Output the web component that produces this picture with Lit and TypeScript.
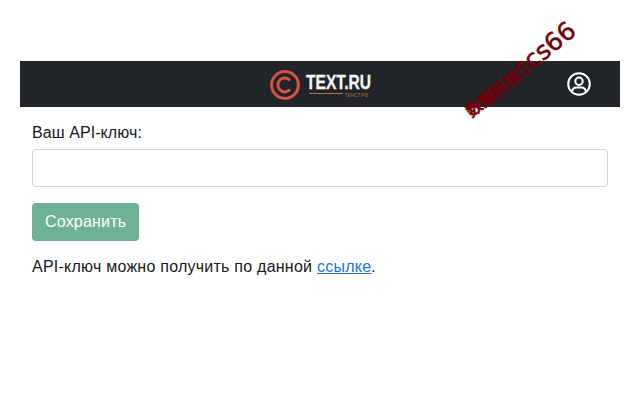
import { LitElement, html, css } from 'lit';
import { customElement } from 'lit/decorators.js';

@customElement('app-root')
export class AppRoot extends LitElement {
  static styles = css`
    :host {
      display: block;
      height: 400px;
      background: #fff;
      font-family: "Liberation Sans", Arial, sans-serif;
      font-size: 16px;
      color: #16181b;
      position: relative;
      overflow: hidden;
      padding-top: 61px;
      box-sizing: border-box;
    }
    .navbar {
      height: 46px;
      margin: 0 20px;
      background: #212529;
      position: relative;
      display: flex;
      align-items: center;
      justify-content: center;
    }
    .logo {
      display: flex;
      align-items: center;
      gap: 6px;
      margin-top: 2px;
    }
    .brand {
      display: flex;
      flex-direction: column;
      align-items: flex-start;
      width: 65px;
    }
    .brand-name {
      font-weight: 700;
      font-size: 19.5px;
      line-height: 20px;
      color: #f4f4f4;
      white-space: nowrap;
      transform: scaleX(0.8);
      transform-origin: left center;
      -webkit-text-stroke: 0.3px #f4f4f4;
    }
    .brand-sub {
      display: flex;
      align-items: center;
      gap: 2px;
      height: 6px;
      margin-left: 3px;
      font-size: 5px;
      line-height: 6px;
      color: #a5713a;
      white-space: nowrap;
    }
    .brand-line {
      width: 34px;
      height: 1px;
      margin-top: -3px;
      background: #b07a3c;
    }
    .user {
      position: absolute;
      right: 29px;
      top: 11px;
      width: 24px;
      height: 24px;
    }
    .content {
      padding: 14px 32px 0;
    }
    label {
      display: block;
      line-height: 24px;
      margin-bottom: 4px;
      letter-spacing: 0.08px;
    }
    .field {
      display: block;
      box-sizing: border-box;
      width: 100%;
      height: 38px;
      border: 1px solid #ced4da;
      border-radius: 4px;
      background: #fff;
      margin-bottom: 16px;
    }
    .save {
      display: block;
      height: 38px;
      padding: 0 13px;
      border: 0;
      border-radius: 4px;
      background: #6fb197;
      color: #fff;
      font: inherit;
      letter-spacing: 0.2px;
      line-height: 38px;
      margin-bottom: 14px;
    }
    p {
      margin: 0;
      line-height: 24px;
      letter-spacing: 0.24px;
    }
    a {
      color: #1a73d9;
      text-decoration: underline;
    }
    .mark {
      position: absolute;
      left: 520px;
      top: 70px;
      transform: translate(-50%, -50%) rotate(-38.5deg);
      white-space: nowrap;
      color: #760008;
      font-family: "DejaVu Sans", sans-serif;
      font-size: 25px;
      line-height: 24px;
      -webkit-text-stroke: 0.5px #760008;
    }
    .mark-cjk {
      font-family: "Noto Sans CJK SC", sans-serif;
      font-size: 16px;
      font-weight: 700;
    }
  `;

  render() {
    return html`
      <div class="navbar">
        <div class="logo">
          <svg width="30" height="30" viewBox="0 0 30 30" fill="none">
            <circle cx="15" cy="15" r="13.4" stroke="#d9523f" stroke-width="3" />
            <path d="M20 10.6a6.9 6.9 0 1 0 0 8.8" stroke="#d9523f" stroke-width="3" />
          </svg>
          <div class="brand">
            <span class="brand-name">TEXT.RU</span>
            <span class="brand-sub"><i class="brand-line"></i>ТЕКСТ.РФ</span>
          </div>
        </div>
        <svg class="user" viewBox="0 0 24 24" fill="none" stroke="#fff" stroke-width="2">
          <circle cx="12" cy="12" r="10.8" />
          <circle cx="12" cy="9.3" r="3.7" />
          <path d="M5.2 19.3C5.6 17 7.2 15.6 9.3 15.6h5.4c2.1 0 3.7 1.4 4.1 3.7" />
        </svg>
      </div>
      <div class="content">
        <label>Ваш API-ключ:</label>
        <input class="field" type="text" />
        <button class="save">Сохранить</button>
        <p>API-ключ можно получить по данной <a href="#">ссылке</a>.</p>
      </div>
      <div class="mark"><span class="mark-cjk">数据科技</span>scs66</div>
    `;
  }
}
